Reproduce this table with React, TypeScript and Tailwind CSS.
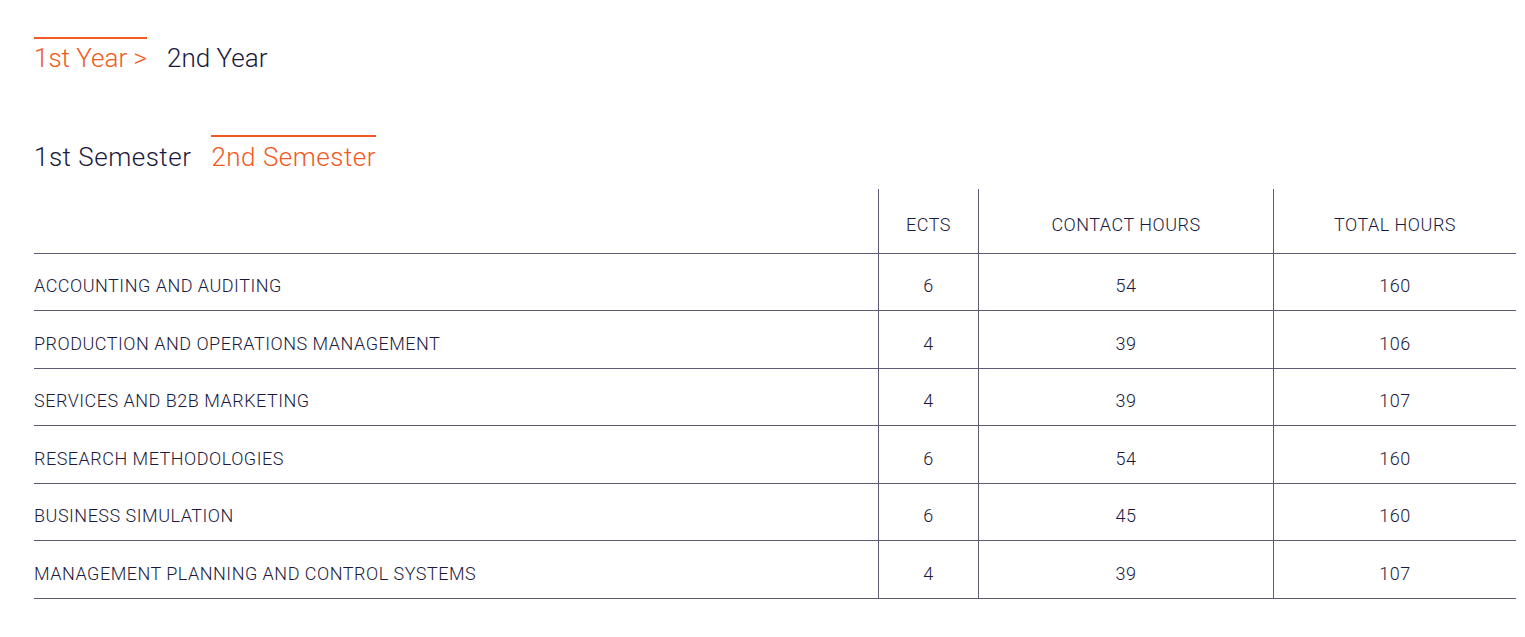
import React from "react";

const rows = [
  ["ACCOUNTING AND AUDITING", "6", "54", "160"],
  ["PRODUCTION AND OPERATIONS MANAGEMENT", "4", "39", "106"],
  ["SERVICES AND B2B MARKETING", "4", "39", "107"],
  ["RESEARCH METHODOLOGIES", "6", "54", "160"],
  ["BUSINESS SIMULATION", "6", "45", "160"],
  ["MANAGEMENT PLANNING AND CONTROL SYSTEMS", "4", "39", "107"],
];

export default function App() {
  return (
    <div className="min-h-screen bg-white pl-[34px] pr-[9px] pt-[37px] text-[#1b1a3e]" style={{ fontFamily: "Roboto, 'Liberation Sans', sans-serif" }}>
      <div className="flex gap-[20px] text-[26px] font-light leading-[30px]">
        <div className="border-t-2 border-[#f15a22] pt-[4px] text-[#f15a22]">1st Year &gt;</div>
        <div className="border-t-2 border-transparent pt-[4px]">2nd Year</div>
      </div>
      <div className="mt-[62px] flex gap-[20px] text-[26px] font-light leading-[30px] tracking-[0.5px]">
        <div className="border-t-2 border-transparent pt-[5px]">1st Semester</div>
        <div className="border-t-2 border-[#f15a22] pt-[5px] text-[#f15a22]">2nd Semester</div>
      </div>
      <div className="mt-[17px] w-[1482px] text-[18px] font-light tracking-[0.5px]">
        <div className="grid h-[65px] grid-cols-[844px_100px_295px_243px] border-b border-[#5d5b73]">
          <div></div>
          <div className="flex items-center justify-center border-l border-[#5d5b73] pt-[7px]">ECTS</div>
          <div className="flex items-center justify-center border-l border-[#5d5b73] pt-[7px]">CONTACT HOURS</div>
          <div className="flex items-center justify-center border-l border-[#5d5b73] pt-[7px]">TOTAL HOURS</div>
        </div>
        {rows.map((r, i) => (
          <div key={i} className={`grid grid-cols-[844px_100px_295px_243px] border-b border-[#5d5b73] ${i % 2 === 0 ? "h-[57px]" : "h-[58px]"}`}>
            <div className="flex items-center pt-[7px]">{r[0]}</div>
            <div className="flex items-center justify-center border-l border-[#5d5b73] pt-[7px]">{r[1]}</div>
            <div className="flex items-center justify-center border-l border-[#5d5b73] pt-[7px]">{r[2]}</div>
            <div className="flex items-center justify-center border-l border-[#5d5b73] pt-[7px]">{r[3]}</div>
          </div>
        ))}
      </div>
    </div>
  );
}
